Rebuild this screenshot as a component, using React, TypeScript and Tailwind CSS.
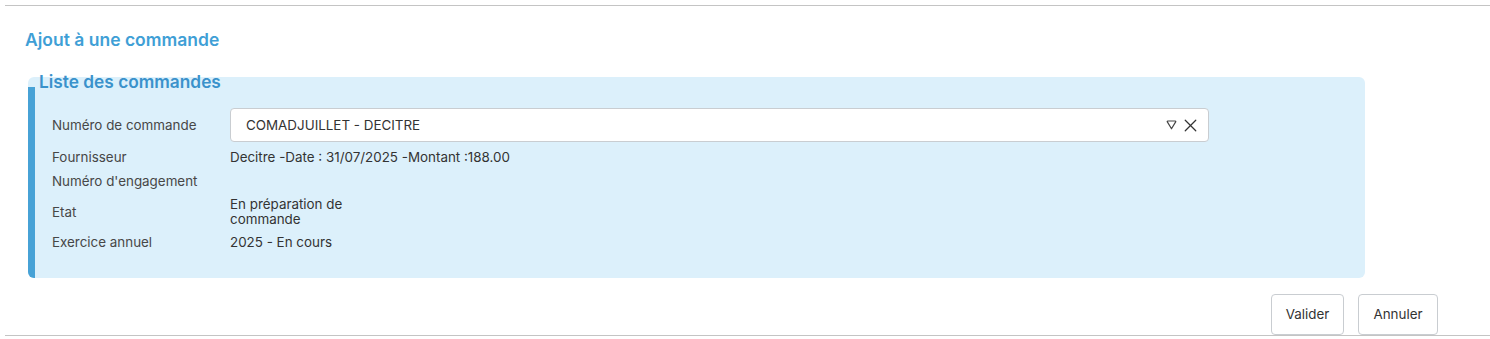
import { X } from "lucide-react";

const rows: { label: string; value?: React.ReactNode }[] = [
  { label: "Fournisseur", value: "Decitre -Date : 31/07/2025 -Montant :188.00" },
  { label: "Numéro d'engagement" },
  {
    label: "Etat",
    value: (
      <>
        En préparation de
        <br />
        commande
      </>
    ),
  },
  { label: "Exercice annuel", value: "2025 - En cours" },
];

const App: React.FC = () => {
  return (
    <main className="w-[1490px] h-[339px] bg-white font-['Inter',sans-serif] overflow-hidden">
      <div className="ml-[5px] mt-[5px] border-t border-b border-[#c4c4c4]">
        <h1 className="ml-[20px] mt-[24px] text-[17.5px] leading-5 font-semibold text-[#3f9fd6]">
          Ajout à une commande
        </h1>

        <section className="relative ml-[23px] mt-[27px] w-[1337px] bg-[#dcf0fb] rounded-md pt-[10px]">
          <h2 className="absolute left-[11px] -top-[3px] text-[17.3px] leading-4 font-semibold text-[#3a92cb]">
            Liste des commandes
          </h2>

          <div className="border-l-[7px] border-[#47a2d6] rounded-bl-md pl-[17px] pt-[21px] pb-[27px] flex flex-col gap-[7px]">
            <div className="flex items-center h-[34px]">
              <span className="w-[178px] text-[13.4px] leading-[15px] text-[#474747]">Numéro de commande</span>
              <div className="flex items-center w-[979px] h-[34px] bg-white border border-[#c9cdd1] rounded-[4px] pl-[15px] pr-[7px]">
                <span className="flex-1 text-[13.4px] text-[#333]">COMADJUILLET - DECITRE</span>
                <svg width="11" height="10" viewBox="0 0 11 10" fill="none" className="mr-[3px] -mt-[1px]">
                  <path d="M1.2 1.6C1.2 1.2 1.5 1 2 1H9C9.5 1 9.8 1.2 9.8 1.6L5.5 8.8Z" stroke="#444" strokeWidth="1.2" strokeLinejoin="round" />
                </svg>
                <X size={21} strokeWidth={1.4} className="text-[#333]" />
              </div>
            </div>

            {rows.map((row) => (
              <div key={row.label} className="flex items-center min-h-[17px]">
                <span className="w-[178px] text-[13.4px] leading-[15px] text-[#474747]">{row.label}</span>
                <span className="text-[13.4px] leading-[15px] text-[#333]">{row.value}</span>
              </div>
            ))}
          </div>
        </section>

        <div className="flex justify-end gap-[14px] pr-[52px] mt-[16px]">
          <button className="h-[41px] w-[73px] bg-white border border-[#c9cdd1] rounded-[4px] text-[13.4px] text-[#333]">
            Valider
          </button>
          <button className="h-[41px] w-[80px] bg-white border border-[#c9cdd1] rounded-[4px] text-[13.4px] text-[#333]">
            Annuler
          </button>
        </div>
      </div>
    </main>
  );
};

export default App;
